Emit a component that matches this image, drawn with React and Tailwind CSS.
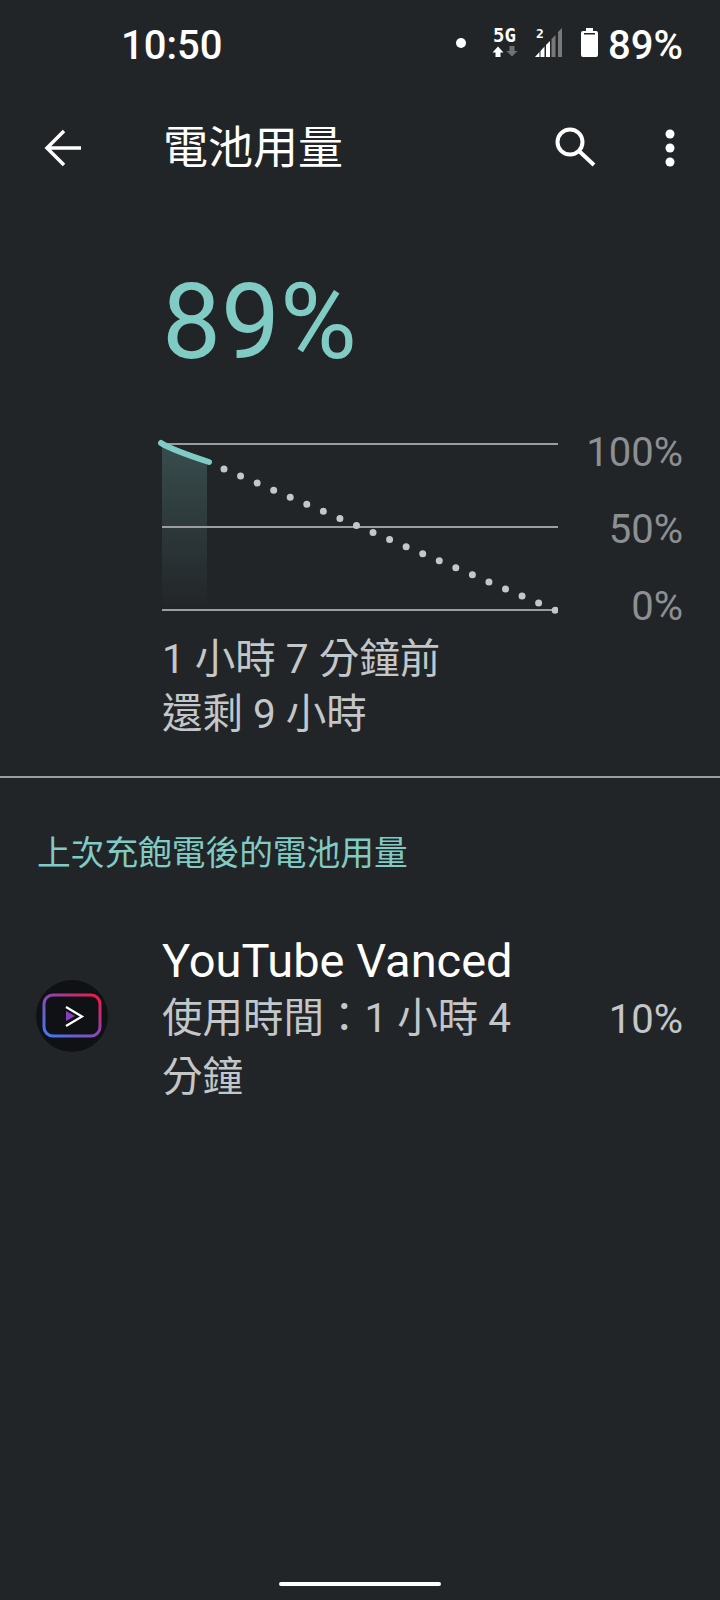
import React from "react";

const StatusIcons = () => (
  <svg width="158" height="56" viewBox="0 -8 158 56" className="block shrink-0">
    <circle cx="11" cy="17" r="5" fill="#fff" />
    <text x="43" y="16" fontFamily="'DejaVu Sans Mono', monospace" fontWeight="700" fontSize="19" fill="#fff">5G</text>
    <path d="M48 20.500L53.500 26.500H50.500V31H45.500V26.500H42.500Z" fill="#fff" />
    <path d="M59.500 20H64.500V25H67.500L62 30.500L56.500 25H59.500Z" fill="#6f7173" />
    <text x="86" y="12" fontFamily="'DejaVu Sans Mono', monospace" fontWeight="700" fontSize="13" fill="#fff">2</text>
    <path d="M85 31L89.500 26V31Z M90.500 31V25L94.500 20.500V31Z M96 31V19L100 15V31Z" fill="#fff" />
    <path d="M101.500 31V13L105.500 9V31Z M108 31V6L112 2V31Z" fill="#77797b" />
    <path d="M136 5V2H143V5H146Q148 5 148 7V29Q148 31 146 31H133Q131 31 131 29V7Q131 5 133 5Z" fill="#fff" />
    <rect x="134" y="7" width="11" height="1.500" fill="#222528" />
  </svg>
);

const Chart = () => (
  <svg width="400" height="176" viewBox="158 438 400 176" className="block shrink-0">
    <defs>
      <linearGradient id="fade" x1="0" y1="0" x2="0" y2="1">
        <stop offset="0" stopColor="#80cbc4" stopOpacity="0.24" />
        <stop offset="1" stopColor="#80cbc4" stopOpacity="0" />
      </linearGradient>
    </defs>
    <path d="M162 444L207 462V608H162Z" fill="url(#fade)" />
    <path d="M162 444H558M162 527H558M162 610H558" stroke="#9b9d9f" strokeWidth="2" />
    <path d="M161 443Q172 450 209 462" fill="none" stroke="#80cbc4" strokeWidth="6" strokeLinecap="round" />
    <path d="M224 469L556 610.500" fill="none" stroke="#c3c7ca" strokeWidth="7" strokeLinecap="round" strokeDasharray="0 18" />
  </svg>
);

const VancedIcon = () => (
  <svg width="72" height="72" viewBox="36 980 72 72" className="block shrink-0 self-start mt-[47px]">
    <defs>
      <linearGradient id="vanced" x1="0" y1="1" x2="1" y2="0">
        <stop offset="0" stopColor="#3f7cf5" />
        <stop offset="0.55" stopColor="#8e44ad" />
        <stop offset="1" stopColor="#f5183f" />
      </linearGradient>
    </defs>
    <circle cx="72" cy="1016" r="36" fill="#101114" />
    <rect x="44" y="995" width="56" height="41" rx="9" fill="none" stroke="url(#vanced)" strokeWidth="3" />
    <path d="M66 1011L75 1016L66 1021Z" fill="#8a3fc0" />
    <path d="M66 1007L82 1016.500L66 1026" fill="none" stroke="#fff" strokeWidth="2.200" />
  </svg>
);

export default function App() {
  return (
    <div className="w-[720px] h-[1600px] bg-[#222528] flex flex-col font-['Roboto','Noto_Sans_CJK_TC',sans-serif] overflow-hidden">
      {/* status bar */}
      <div className="h-[88px] pt-[4px] flex items-center justify-between pl-[121px] pr-[37px] text-white">
        <span className="text-[40px] font-medium leading-none">10:50</span>
        <div className="flex items-center">
          <StatusIcons />
          <span className="text-[40px] font-medium leading-none">89%</span>
        </div>
      </div>

      {/* toolbar */}
      <div className="h-[124px] flex items-center pb-[4px]">
        <svg width="40" height="40" viewBox="0 0 40 40" className="ml-[44px] shrink-0">
          <path d="M37 20H4M20 3L3 20L20 37" fill="none" stroke="#fff" strokeWidth="3.500" />
        </svg>
        <h1 className="ml-[79px] text-[45px] leading-none text-white font-normal">電池用量</h1>
        <svg width="44" height="44" viewBox="0 0 44 44" className="ml-auto shrink-0">
          <circle cx="17" cy="16" r="12.500" fill="none" stroke="#fff" strokeWidth="4" />
          <path d="M26 25L41 39" stroke="#fff" strokeWidth="4" />
        </svg>
        <svg width="12" height="42" viewBox="0 0 12 42" className="ml-[67px] mr-[44px] shrink-0">
          <circle cx="6" cy="7" r="4.500" fill="#fff" />
          <circle cx="6" cy="21" r="4.500" fill="#fff" />
          <circle cx="6" cy="35" r="4.500" fill="#fff" />
        </svg>
      </div>

      {/* battery level */}
      <div className="pl-[162px] pt-[51px] text-[105px] leading-[120px] text-[#80cbc4]">89%</div>

      {/* chart */}
      <div className="flex pl-[158px] pr-[37px] mt-[55px] justify-between">
        <Chart />
        <div className="flex flex-col items-end text-[40px] leading-[44px] text-[#8d9093] gap-[33px] -mt-[7px]">
          <span>100%</span>
          <span>50%</span>
          <span>0%</span>
        </div>
      </div>

      {/* time labels */}
      <div className="pl-[162px] mt-[3px] text-[40.500px] leading-[55px] text-[#c4c7c9]">
        <div>1 小時 7 分鐘前</div>
        <div>還剩 9 小時</div>
      </div>

      <div className="h-[2px] bg-[#9b9d9f] mt-[34px]"></div>

      {/* usage list */}
      <div className="pl-[37px] mt-[54px] text-[33.700px] leading-[44px] text-[#80cbc4]">上次充飽電後的電池用量</div>

      <div className="flex items-center pl-[36px] pr-[37px] mt-[57px]">
        <VancedIcon />
        <div className="ml-[54px] w-[370px]">
          <div className="text-[47px] leading-[56px] text-white">YouTube Vanced</div>
          <div className="text-[40.500px] leading-[59px] text-[#c4c7c9]">使用時間：1 小時 4 分鐘</div>
        </div>
        <span className="ml-auto text-[40px] leading-none text-[#c4c7c9]">10%</span>
      </div>

      {/* gesture bar */}
      <div className="mt-auto mb-[14px] mx-auto w-[162px] h-[4px] rounded-full bg-white"></div>
    </div>
  );
}
